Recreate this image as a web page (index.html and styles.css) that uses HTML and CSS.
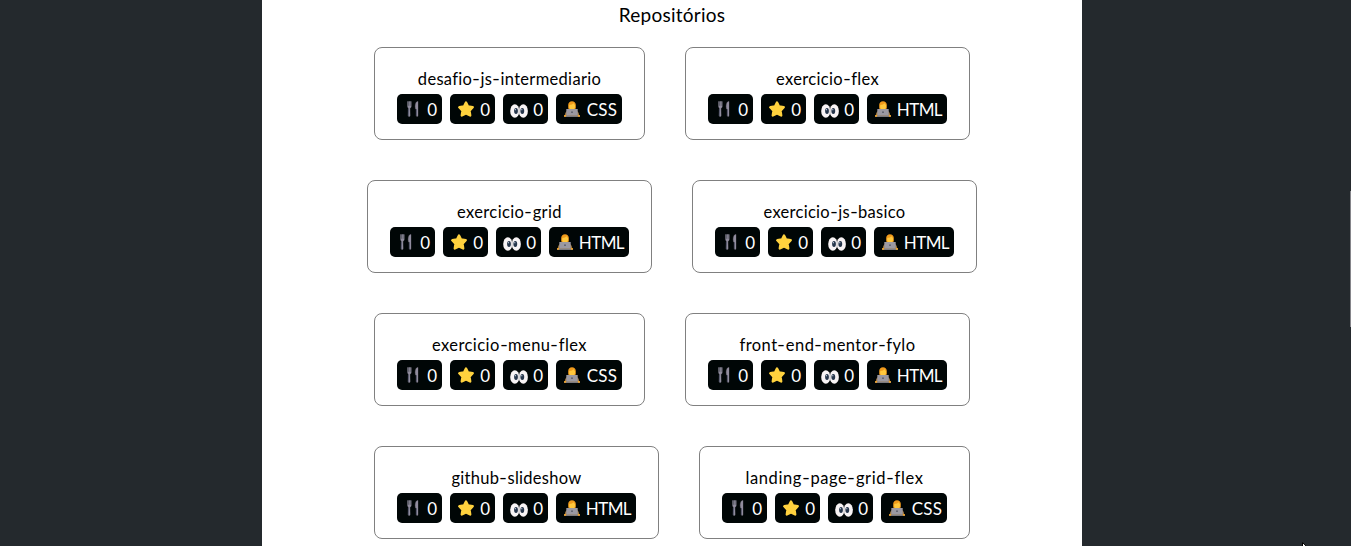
FILE: index.html
```
<!DOCTYPE html>
<html lang="pt-BR">
<head>
<meta charset="utf-8">
<title>Repositórios</title>
<link rel="stylesheet" href="styles.css">
</head>
<body>
<svg class="defs" aria-hidden="true">
  <symbol id="fork" viewBox="0 0 16 16">
    <path d="M2.600 .5v5q0 1.300 1 1.700l-.3 7.400q0 1 .9 1t.9-1L4.900 7.200Q6.200 6.700 6.200 5.500v-5H5.400v4.200H4.800V.5H4v4.200H3.400V.5z" fill="#918d9e" stroke="#918d9e" stroke-width=".4"/>
    <path d="M13 .4q-2.700 0-2.800 5.200 0 2.600 1.200 3v6q0 1 .8 1t.8-1z" fill="#918d9e" stroke="#918d9e" stroke-width=".3"/>
    <path d="M3.300 8v7M11.300 8v7" stroke="#4d526c" stroke-width=".6"/>
  </symbol>
  <symbol id="star" viewBox="0 0 16 16">
    <path d="M8 1.500l2 4 4.700.8-3.200 3.500.7 4.700L8 12.500l-4.200 2 .7-4.700L1.300 6.300 6 5.500z" fill="#ffd23e" stroke="#ffd23e" stroke-width="2.400" stroke-linejoin="round"/>
  </symbol>
  <symbol id="eyes" viewBox="0 0 18 14">
    <ellipse cx="4.800" cy="7" rx="4.600" ry="6.700" fill="#f8f4f5"/>
    <ellipse cx="13.300" cy="7" rx="4.600" ry="6.700" fill="#f8f4f5"/>
    <path d="M9.050 3v8" stroke="#8d8c90" stroke-width=".5"/>
    <ellipse cx="6" cy="7" rx="1.900" ry="3" fill="#26364b"/>
    <ellipse cx="12.300" cy="7" rx="1.900" ry="3" fill="#26364b"/>
    <circle cx="5.500" cy="5.700" r=".6" fill="#c5d5e5"/>
    <circle cx="11.800" cy="5.700" r=".6" fill="#c5d5e5"/>
  </symbol>
  <symbol id="dev" viewBox="0 0 16 16">
    <path d="M.8 15q0-5 3.700-5.500h7q3.700.5 3.700 5.500z" fill="#a07a43"/>
    <path d="M4.200 7V3.800Q4.600.2 8 .2t3.800 3.600V7q-.5 2-2 2h-3.600q-1.600 0-2-2z" fill="#f09a1b"/>
    <path d="M5.300 4q3.200-.1 4.200-1.700L11 4.300v2q-.5 2.500-3 2.500t-2.900-2.500z" fill="#ffc83d"/>
    <path d="M2.300 8h11.400v6.600H2.300z" fill="#9b99a2"/>
    <circle cx="8" cy="11.200" r=".9" fill="#595b68"/>
    <path d="M0 14.600h16v1.300H0z" fill="#8a888f"/>
    <path d="M.1 14h2v1.800h-2zM13.900 14h2v1.800h-2z" fill="#efa126"/>
  </symbol>
</svg>
<main class="page">
  <h2 class="heading">Repositórios</h2>
  <div class="repos" id="repos"></div>
</main>
<div class="scroll-thumb"></div>
<svg class="pointer" viewBox="0 0 12 19"><path d="M.5.500v15l3.500-3.300 2.300 5.300 2.200-1-2.300-5.200h4.800z" fill="#fff" stroke="#000"/></svg>
<script src="app.js"></script>
</body>
</html>
```
FILE: styles.css
```
* { box-sizing: border-box; }
body {
  margin: 0;
  height: 546px;
  overflow: hidden;
  position: relative;
  background: #24292d;
  color: #000;
  font-family: Lato, "Open Sans", sans-serif;
}
.defs { display: none; }
.page {
  width: 820px;
  height: 546px;
  margin-left: 262px;
  background: #fff;
  overflow: hidden;
}
.heading {
  margin: 0;
  height: 47px;
  padding-top: 3px;
  text-align: center;
  font-size: 19px;
  line-height: 23px;
  font-weight: 400;
  letter-spacing: .25px;
}
.repos {
  display: flex;
  flex-wrap: wrap;
  justify-content: center;
  gap: 40px;
  padding: 0 80px;
}
.card {
  height: 93px;
  padding: 21px 22px 0;
  border: 1px solid #808080;
  border-radius: 8px;
  display: flex;
  flex-direction: column;
  align-items: center;
}
.title {
  height: 25px;
  margin: 0;
  font-size: 16.5px;
  line-height: 20px;
  font-weight: 400;
  white-space: nowrap;
}
.dash {
  display: inline-block;
  transform: scaleX(1.3);
  margin: 0 .9px;
}
.chips { display: flex; gap: 8px; }
.chip {
  width: 45px;
  height: 30px;
  padding: 0 5px 0 8px;
  border-radius: 5px;
  background: #000606;
  color: #fff;
  display: flex;
  align-items: center;
  justify-content: space-between;
  font-size: 17px;
  line-height: 30px;
}
.chip.css { width: 66px; }
.chip.html { width: 80px; }
.label { white-space: nowrap; padding-top: 1px; }
.chip.css .label { letter-spacing: .2px; margin-right: -.2px; }
.chip.html .label { letter-spacing: -.6px; }
.icon { width: 16px; height: 16px; flex: none; }
.icon.eyes { width: 18px; height: 14px; margin-left: -1px; margin-right: -1px; margin-top: 3px; }
.scroll-thumb {
  position: absolute;
  right: 0;
  top: 191px;
  width: 1px;
  height: 136px;
  background: #85858a;
}
.pointer { position: absolute; left: 1302px; top: 542px; width: 12px; height: 19px; }
```
FILE: app.js
```
const repos = [
  ["desafio-js-intermediario", "CSS", 182],
  ["exercicio-flex", "HTML", 102],
  ["exercicio-grid", "HTML", 104],
  ["exercicio-js-basico", "HTML", 141],
  ["exercicio-menu-flex", "CSS", 154],
  ["front-end-mentor-fylo", "HTML", 175],
  ["github-slideshow", "HTML", 129],
  ["landing-page-grid-flex", "CSS", 177]
];
const chip = (icon, label, kind = "") =>
  `<span class="chip ${kind}"><svg class="icon ${icon}"><use href="#${icon}"/></svg><span class="label">${label}</span></span>`;
const list = document.getElementById("repos");
list.innerHTML = repos.map(([name, lang]) =>
  `<article class="card"><h3 class="title">${name.replaceAll("-", '<span class="dash">-</span>')}</h3><div class="chips">${chip("fork", 0)}${chip("star", 0)}${chip("eyes", 0)}${chip("dev", lang, lang.toLowerCase())}</div></article>`
).join("");
list.querySelectorAll(".title").forEach((el, i) => {
  const space = (repos[i][2] + 1 - el.getBoundingClientRect().width) / repos[i][0].length;
  el.style.letterSpacing = `${space}px`;
});
```
